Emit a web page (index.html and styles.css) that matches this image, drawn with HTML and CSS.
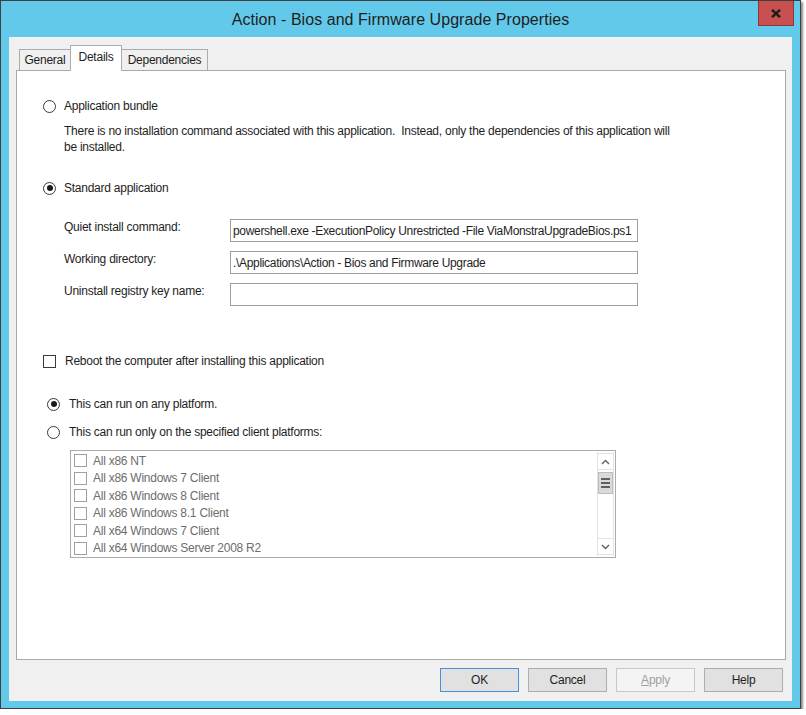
FILE: index.html
```html
<!DOCTYPE html>
<html>
<head>
<meta charset="utf-8">
<link rel="stylesheet" href="styles.css">
</head>
<body>
<div class="window">
  <div class="titlebar">
    <span></span>
    <div class="title">Action - Bios and Firmware Upgrade Properties</div>
    <div class="tb-right">
      <div class="close"><svg width="10" height="9" viewBox="0 0 10 9"><path d="M1 0.8 L9 8.2 M9 0.8 L1 8.2" stroke="#1b1b1b" stroke-width="2.3" fill="none"/></svg></div>
    </div>
  </div>
  <div class="client">
    <div class="tabs">
      <div class="tab t-general">General</div>
      <div class="tab active t-details">Details</div>
      <div class="tab t-deps">Dependencies</div>
    </div>
    <div class="panel">
      <div class="opt r1"><span class="radio"></span><span>Application bundle</span></div>
      <p class="desc">There is no installation command associated with this application.&nbsp; Instead, only the dependencies of this application will<br>be installed.</p>
      <div class="opt r2"><span class="radio checked"></span><span>Standard application</span></div>
      <div class="fields">
        <label>Quiet install command:</label>
        <input type="text" readonly value="powershell.exe -ExecutionPolicy Unrestricted -File ViaMonstraUpgradeBios.ps1">
        <label>Working directory:</label>
        <input type="text" readonly value=".\Applications\Action - Bios and Firmware Upgrade">
        <label>Uninstall registry key name:</label>
        <input type="text" readonly value="">
      </div>
      <div class="opt chk"><span class="checkbox"></span><span>Reboot the computer after installing this application</span></div>
      <div class="opt r3"><span class="radio checked"></span><span>This can run on any platform.</span></div>
      <div class="opt r4"><span class="radio"></span><span>This can run only on the specified client platforms:</span></div>
      <div class="listbox">
        <ul class="items">
          <li><span class="cb"></span>All x86 NT</li>
          <li><span class="cb"></span>All x86 Windows 7 Client</li>
          <li><span class="cb"></span>All x86 Windows 8 Client</li>
          <li><span class="cb"></span>All x86 Windows 8.1 Client</li>
          <li><span class="cb"></span>All x64 Windows 7 Client</li>
          <li><span class="cb"></span>All x64 Windows Server 2008 R2</li>
        </ul>
        <div class="scrollbar">
          <div class="sb-btn"><svg width="9" height="6" viewBox="0 0 9 6"><path d="M1 5 L4.5 1.5 L8 5" stroke="#606060" stroke-width="1.4" fill="none"/></svg></div>
          <div class="sb-thumb"><span></span><span></span><span></span></div>
          <div class="sb-track"></div>
          <div class="sb-btn"><svg width="9" height="6" viewBox="0 0 9 6"><path d="M1 1 L4.5 4.5 L8 1" stroke="#606060" stroke-width="1.4" fill="none"/></svg></div>
        </div>
      </div>
    </div>
    <div class="buttons">
      <button class="btn default">OK</button>
      <button class="btn">Cancel</button>
      <button class="btn disabled"><u>A</u>pply</button>
      <button class="btn">Help</button>
    </div>
  </div>
</div>
</body>
</html>
```
FILE: styles.css
```css
html, body {
  margin: 0;
  padding: 0;
  background: #ffffff;
}
body {
  font-family: "Liberation Sans", Arial, sans-serif;
  font-size: 12px;
  color: #1e1e1e;
  letter-spacing: -0.25px;
}
.window {
  width: 799px;
  height: 707px;
  border: 1px solid #3f3f3f;
  background: #63c9ea;
  box-shadow: 2px 2px 2px #8c8c8c;
  display: flex;
  flex-direction: column;
}
.titlebar {
  height: 36px;
  display: grid;
  grid-template-columns: 1fr auto 1fr;
  align-items: start;
}
.title {
  font-size: 16px;
  line-height: 37px;
  letter-spacing: 0.05px;
  color: #1e1e1e;
  white-space: nowrap;
}
.tb-right {
  display: flex;
  justify-content: flex-end;
  padding-right: 6px;
}
.close {
  width: 36px;
  height: 25px;
  box-sizing: border-box;
  background: #c75050;
  border: 1px solid #8e3434;
  border-top: none;
  display: flex;
  align-items: center;
  justify-content: center;
}
.client {
  margin: 0 8px 7px 8px;
  flex: 1;
  background: #f0f0f0;
  padding: 8px 6px 0 7px;
  display: flex;
  flex-direction: column;
}
.tabs {
  height: 25px;
  display: flex;
  align-items: flex-end;
  padding-left: 3px;
}
.tab {
  box-sizing: border-box;
  height: 21px;
  padding-top: 2px;
  line-height: 16px;
  text-align: center;
  border: 1px solid #acacac;
  border-bottom: none;
  background: #f0f0f0;
  margin-right: -1px;
}
.tab.active {
  height: 26px;
  padding-top: 3px;
  background: #ffffff;
  margin-bottom: -1px;
  position: relative;
  z-index: 1;
}
.t-general { width: 52px; }
.t-details { width: 52px; }
.t-deps { width: 87px; }
.panel {
  flex: 1;
  background: #ffffff;
  border: 1px solid #a9a9a9;
  padding: 27px 0 0 26px;
  display: flex;
  flex-direction: column;
  align-items: flex-start;
}
.opt {
  display: flex;
  align-items: center;
  height: 16px;
  gap: 8px;
  white-space: nowrap;
}
.radio {
  width: 13px;
  height: 13px;
  box-sizing: border-box;
  border: 1px solid #3a3a3a;
  border-radius: 50%;
  background: #fff;
  display: flex;
  align-items: center;
  justify-content: center;
  flex: none;
}
.radio.checked::after {
  content: "";
  width: 6px;
  height: 6px;
  border-radius: 50%;
  background: #1a1a1a;
}
.checkbox {
  width: 13px;
  height: 13px;
  box-sizing: border-box;
  border: 1px solid #3a3a3a;
  background: #fff;
  flex: none;
}
.desc {
  margin: 9px 0 0 21px;
  line-height: 16px;
  white-space: nowrap;
}
.r2 { margin-top: 25px; }
.fields {
  margin: 23px 0 0 21px;
  display: grid;
  grid-template-columns: 166px 408px;
  row-gap: 9px;
}
.fields label {
  line-height: 16px;
}
.fields input {
  box-sizing: border-box;
  width: 408px;
  height: 23px;
  margin: 0;
  padding: 0 1px 0 2px;
  border: 1px solid #9e9e9e;
  font-family: inherit;
  font-size: 12px;
  letter-spacing: -0.32px;
  color: #1e1e1e;
  background: #fff;
  outline: none;
}
.chk {
  margin-top: 47px;
  gap: 9px;
}
.r3 {
  margin-top: 27px;
  margin-left: 4px;
  gap: 9px;
}
.r4 {
  margin-top: 12px;
  margin-left: 4px;
  gap: 9px;
}
.listbox {
  margin: 10px 0 0 27px;
  width: 546px;
  height: 108px;
  box-sizing: border-box;
  border: 1px solid #ababab;
  padding: 1px;
  display: flex;
}
.items {
  flex: 1;
  list-style: none;
  margin: 0;
  padding: 0 0 0 2px;
}
.items li {
  height: 17.5px;
  display: flex;
  align-items: center;
  gap: 6px;
  color: #6d6d6d;
  white-space: nowrap;
}
.cb {
  width: 13px;
  height: 13px;
  box-sizing: border-box;
  border: 1px solid #a0a0a0;
  background: #fff;
  flex: none;
}
.scrollbar {
  width: 17px;
  box-sizing: border-box;
  border-left: 1px solid #e3e3e3;
  border-right: 1px solid #e3e3e3;
  display: flex;
  flex-direction: column;
  padding: 1px 0;
}
.sb-btn {
  height: 17px;
  box-sizing: border-box;
  border-top: 1px solid #e3e3e3;
  border-bottom: 1px solid #e3e3e3;
  display: flex;
  align-items: center;
  justify-content: center;
}
.sb-thumb {
  margin-top: 2px;
  height: 22px;
  box-sizing: border-box;
  background: #dadada;
  border: 1px solid #bcbcbc;
  display: flex;
  flex-direction: column;
  align-items: center;
  justify-content: center;
  gap: 2px;
}
.sb-thumb span {
  width: 9px;
  height: 2px;
  background: #5f5f5f;
}
.sb-track {
  flex: 1;
}
.buttons {
  margin: 8px 3px 9px 0;
  display: flex;
  justify-content: flex-end;
  gap: 9px;
}
.btn {
  width: 79px;
  height: 24px;
  margin: 0;
  padding: 0;
  box-sizing: border-box;
  background: #e1e1e1;
  border: 1px solid #adadad;
  font-family: inherit;
  font-size: 12px;
  letter-spacing: -0.25px;
  color: #1e1e1e;
}
.btn.default {
  border-color: #4a90d9;
}
.btn.disabled {
  background: #f4f4f4;
  border-color: #c8c8c8;
  color: #a0a0a0;
}
```
